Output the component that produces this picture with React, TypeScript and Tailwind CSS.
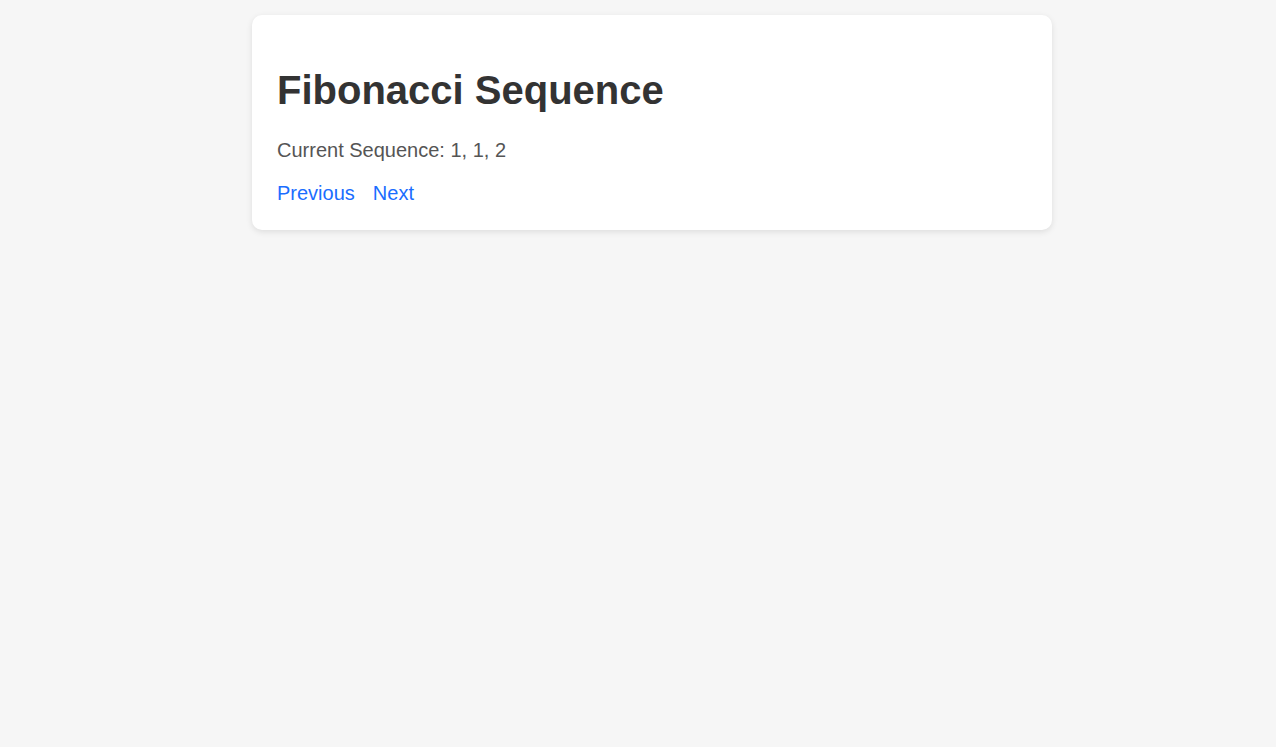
export default function App() {
  return (
    <div className="min-h-[747px] bg-[#f6f6f6] pt-[15px] pl-[28px] font-['Liberation_Sans',Arial,sans-serif]">
      <div className="mx-auto w-[800px] rounded-[10px] bg-white p-[25px] shadow-[0_2px_6px_rgba(0,0,0,0.1)]">
        <h1 className="mt-[27px] mb-[26px] text-[40px] leading-[46px] font-bold text-[#333]">
          Fibonacci Sequence
        </h1>
        <p className="mb-[20px] text-[20px] leading-[23px] text-[#555]">Current Sequence: 1, 1, 2</p>
        <div className="flex gap-[18px] text-[20px] leading-[23px]">
          <a href="#" className="text-[#1a6dff]">Previous</a>
          <a href="#" className="text-[#1a6dff]">Next</a>
        </div>
      </div>
    </div>
  );
}
